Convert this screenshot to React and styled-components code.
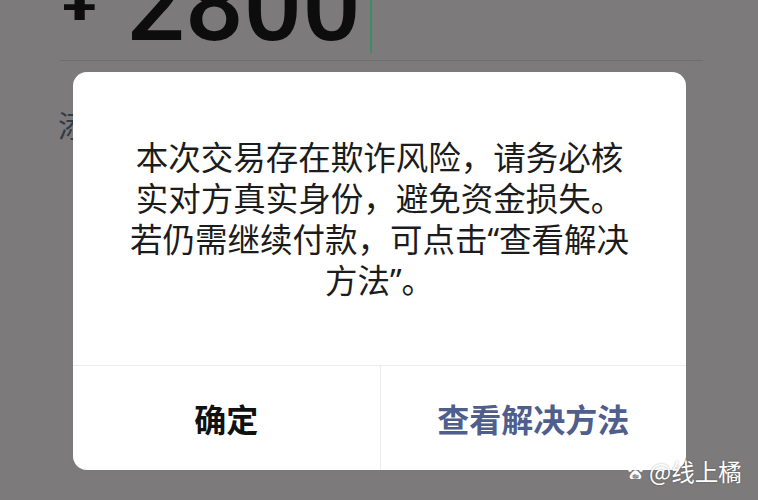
import React from "react";
import styled, { createGlobalStyle } from "styled-components";

const Global = createGlobalStyle`
  html, body {
    margin: 0;
    padding: 0;
    background: #7c7a7a;
  }
  body {
    font-family: "Noto Sans CJK SC", "Noto Sans", sans-serif;
  }
`;

const Page = styled.div`
  position: relative;
  width: 758px;
  height: 500px;
  overflow: hidden;
  background: #7c7a7a;
`;

const Amount = styled.div`
  display: flex;
  align-items: flex-end;
  height: 42px;
  padding-left: 61px;
  font-family: Roboto, "Liberation Sans", sans-serif;
  color: #0d0d0d;
`;

const Currency = styled.span`
  align-self: flex-start;
  margin-top: -39px;
  font-size: 70px;
  line-height: 70px;
  font-weight: 700;
`;

const Digits = styled.span`
  margin-left: 28px;
  font-size: 103px;
  line-height: 74px;
  font-weight: 500;
`;

const Caret = styled.span`
  align-self: flex-start;
  flex: none;
  width: 2px;
  height: 53px;
  margin-left: 9px;
  background: #3f8a68;
`;

const Rule = styled.div`
  height: 1px;
  margin: 18px 55px 0 60px;
  background: #6f6e6e;
`;

const Note = styled.div`
  margin: 48px 0 0 58px;
  font-size: 30px;
  line-height: 30px;
  color: #353a48;
`;

const Dialog = styled.div`
  position: absolute;
  left: 73px;
  top: 72px;
  width: 613px;
  height: 398px;
  display: flex;
  flex-direction: column;
  background: #fff;
  border-radius: 14px;
  overflow: hidden;
`;

// latin quotes stay narrow, the rest falls through to the CJK face
const Message = styled.div`
  flex: none;
  height: 293px;
  display: flex;
  align-items: center;
  justify-content: center;
  padding: 0 56px;
  box-sizing: border-box;
  text-align: center;
  font-family: "Noto Sans", "Noto Sans CJK SC", sans-serif;
  font-size: 32.5px;
  line-height: 41px;
  color: #1c1c1c;
`;

const Actions = styled.div`
  flex: 1;
  display: grid;
  grid-template-columns: 1fr 1fr;
  border-top: 1px solid #ececec;
`;

const Action = styled.button`
  display: flex;
  align-items: center;
  justify-content: center;
  border: 0;
  border-left: ${(p) => (p.$primary ? "1px solid #ececec" : "0")};
  background: transparent;
  padding: 0;
  font-family: "Noto Sans CJK SC", sans-serif;
  font-size: 32px;
  font-weight: 700;
  color: ${(p) => (p.$primary ? "#4f5e8c" : "#111")};
`;

const Watermark = styled.div`
  position: absolute;
  left: 627px;
  top: 457px;
  display: flex;
  align-items: center;
  gap: 5px;
  font-size: 23.5px;
  line-height: 28px;
  color: #fff;
  text-shadow: 0 0 2px rgba(0, 0, 0, 0.35);
`;

// baidu paw mark
const Paw = () => (
  <svg width="17" height="17" viewBox="0 0 17 17">
    <ellipse cx="3" cy="6.5" rx="2" ry="2.4" fill="#fff" />
    <ellipse cx="6.3" cy="2.8" rx="2" ry="2.5" fill="#fff" />
    <ellipse cx="10.7" cy="2.8" rx="2" ry="2.5" fill="#fff" />
    <ellipse cx="14" cy="6.5" rx="2" ry="2.4" fill="#fff" />
    <path d="M8.5 7.2c-2.4 0-3.4 2.6-5 4.2-1.6 1.6-1 4.6 1.4 4.6 1.4 0 2.2-.5 3.6-.5s2.2.5 3.6.5c2.4 0 3-3 1.4-4.6-1.6-1.6-2.6-4.2-5-4.2z" fill="#fff" />
    <text x="8.5" y="14.6" textAnchor="middle" fontSize="5.5" fontWeight="700" fill="#707070" fontFamily="Roboto, sans-serif">du</text>
  </svg>
);

export default function App() {
  return (
    <Page>
      <Global />
      <Amount>
        <Currency>¥</Currency>
        <Digits>2800</Digits>
        <Caret />
      </Amount>
      <Rule />
      <Note>添加转账说明</Note>

      <Dialog>
        <Message>
          本次交易存在欺诈风险，请务必核实对方真实身份，避免资金损失。若仍需继续付款，可点击“查看解决方法”。
        </Message>
        <Actions>
          <Action>确定</Action>
          <Action $primary>查看解决方法</Action>
        </Actions>
      </Dialog>

      <Watermark>
        <Paw />
        <span>@线上橘</span>
      </Watermark>
    </Page>
  );
}
